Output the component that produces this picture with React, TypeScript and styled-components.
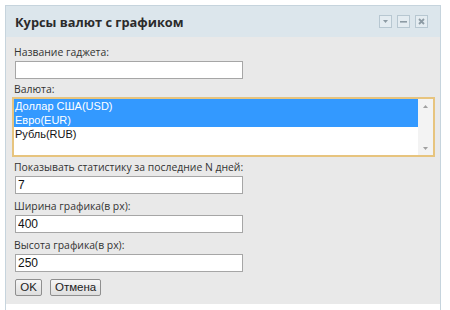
import React from "react";
import styled, { createGlobalStyle } from "styled-components";

const Global = createGlobalStyle`
  html, body { margin: 0; padding: 0; background: #ffffff; }
  body { width: 450px; height: 310px; overflow: hidden; }
`;

const Frame = styled.div`
  margin: 5px 0 0 5px;
  width: 434px;
  height: 305px;
  border: 1px solid #c6d4dd;
  border-bottom: none;
  background: #ffffff;
  display: flex;
  flex-direction: column;
`;

const Header = styled.div`
  height: 31px;
  background: #dce6ec;
  display: flex;
  align-items: center;
  justify-content: space-between;
  padding: 0 12px 0 9px;
  box-sizing: border-box;
`;

const Title = styled.div`
  font-family: "Open Sans", "DejaVu Sans", sans-serif;
  font-weight: 700;
  font-size: 12.8px;
  color: #2b2b2b;
`;

const Tools = styled.div`
  display: flex;
  gap: 5px;
`;

const ToolBtn = styled.div`
  width: 11px;
  height: 11px;
  border: 1px solid #b7c7d1;
  background: #e4ecf1;
  display: flex;
  align-items: center;
  justify-content: center;
`;

const Body = styled.div`
  background: #e9e9e9;
  height: 267px;
  padding: 9px 0 0 8px;
  box-sizing: border-box;
  display: flex;
  flex-direction: column;
  align-items: flex-start;
`;

const Label = styled.div<{ $top?: number; $bottom?: number }>`
  font-family: "Open Sans", "DejaVu Sans", sans-serif;
  font-size: 10.4px;
  line-height: 13px;
  color: #333333;
  margin-top: ${(p) => p.$top ?? 0}px;
  margin-bottom: ${(p) => p.$bottom ?? 2}px;
`;

const Input = styled.input`
  width: 228px;
  height: 18px;
  box-sizing: border-box;
  margin: 0 0 0 1px;
  border: 1px solid #a6a6a6;
  background: #ffffff;
  padding: 0 2px;
  font-family: "Liberation Sans", Arial, sans-serif;
  font-size: 12px;
  color: #111;
  outline: none;
`;

const List = styled.div`
  width: 423px;
  height: 60px;
  box-sizing: border-box;
  margin-left: -2px;
  border: 2px solid #e7c47e;
  background: #ffffff;
  display: flex;
`;

const Options = styled.div`
  flex: 1;
`;

const Option = styled.div<{ $sel?: boolean }>`
  height: 14px;
  line-height: 14px;
  padding-left: 1px;
  font-family: "Liberation Sans", Arial, sans-serif;
  font-size: 11px;
  background: ${(p) => (p.$sel ? "#3399ff" : "transparent")};
  color: ${(p) => (p.$sel ? "#ffffff" : "#111111")};
`;

const Scroll = styled.div`
  width: 15px;
  background: #f3f3f3;
  display: flex;
  flex-direction: column;
  justify-content: space-between;
  align-items: center;
  padding: 6px 0 5px;
  box-sizing: border-box;
`;

const Buttons = styled.div`
  display: flex;
  gap: 8px;
  margin-top: 7px;
  margin-left: 1px;
`;

const Btn = styled.button`
  height: 17px;
  min-width: 27px;
  padding: 0 4px;
  border: 1px solid #8f8f8f;
  border-radius: 2px;
  background: linear-gradient(#f6f6f6, #dedede);
  font-family: "Liberation Sans", Arial, sans-serif;
  font-size: 11.5px;
  color: #222;
  line-height: 15px;
`;

export default function App() {
  return (
    <>
      <Global />
      <Frame>
        <Header>
          <Title>Курсы валют с графиком</Title>
          <Tools>
            <ToolBtn>
              <svg width="5" height="3" viewBox="0 0 5 3"><path d="M0 0h5L2.5 3z" fill="#8d9ba4" /></svg>
            </ToolBtn>
            <ToolBtn>
              <svg width="7" height="2" viewBox="0 0 7 2"><rect width="7" height="1.6" fill="#8d9ba4" /></svg>
            </ToolBtn>
            <ToolBtn>
              <svg width="7" height="7" viewBox="0 0 7 7"><path d="M1 1l5 5M6 1L1 6" stroke="#8d9ba4" strokeWidth="1.8" /></svg>
            </ToolBtn>
          </Tools>
        </Header>
        <Body>
          <Label>Название гаджета:</Label>
          <Input defaultValue="" />
          <Label $top={4} $bottom={1}>Валюта:</Label>
          <List>
            <Options>
              <Option $sel>Доллар США(USD)</Option>
              <Option $sel>Евро(EUR)</Option>
              <Option>Рубль(RUB)</Option>
            </Options>
            <Scroll>
              <svg width="5" height="3" viewBox="0 0 5 3"><path d="M2.5 0L5 3H0z" fill="#a0a0a0" /></svg>
              <svg width="5" height="3" viewBox="0 0 5 3"><path d="M0 0h5L2.5 3z" fill="#a0a0a0" /></svg>
            </Scroll>
          </List>
          <Label $top={4}>Показывать статистику за последние N дней:</Label>
          <Input defaultValue="7" />
          <Label $top={6}>Ширина графика(в px):</Label>
          <Input defaultValue="400" />
          <Label $top={6}>Высота графика(в px):</Label>
          <Input defaultValue="250" />
          <Buttons>
            <Btn>OK</Btn>
            <Btn>Отмена</Btn>
          </Buttons>
        </Body>
      </Frame>
    </>
  );
}
